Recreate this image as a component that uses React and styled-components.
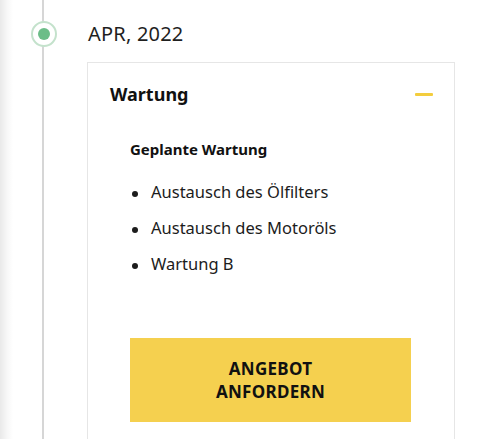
import React from 'react';
import styled, { createGlobalStyle } from 'styled-components';

const GlobalStyle = createGlobalStyle`
  html, body {
    margin: 0;
    padding: 0;
    background: #fff;
  }
  body {
    font-family: "Noto Sans", "Open Sans", Arial, sans-serif;
    color: #1a1a1a;
  }
`;

const Page = styled.div`
  height: 439px;
  overflow: hidden;
  background: linear-gradient(90deg, #e9e9e9 0px, #f7f7f7 7px, #fff 13px);
`;

const TimelineItem = styled.div`
  display: flex;
  height: 100%;
`;

const Rail = styled.div`
  width: 87px;
  flex-shrink: 0;
  display: flex;
  justify-content: center;
  background: linear-gradient(90deg, transparent 42px, #d6d6d6 42px, #d6d6d6 44px, transparent 44px);
`;

const Marker = styled.span`
  box-sizing: border-box;
  width: 26px;
  height: 26px;
  margin-top: 21px;
  border-radius: 50%;
  border: 2px solid #c4e2cc;
  background: #fff;
  display: flex;
  align-items: center;
  justify-content: center;

  &::after {
    content: '';
    width: 12px;
    height: 12px;
    border-radius: 50%;
    background: #6cbd88;
  }
`;

const Content = styled.div`
  flex: 1;
  display: flex;
  flex-direction: column;
`;

const DateLabel = styled.div`
  font-size: 20px;
  line-height: 28px;
  padding: 20px 0 14px 1px;
  color: #1f1f1f;
  letter-spacing: 0.2px;
`;

const Card = styled.section`
  width: 368px;
  box-sizing: border-box;
  border: 1px solid #e6e6e6;
  border-bottom: none;
  flex: 1;
  background: #fff;
`;

const CardHeader = styled.div`
  display: flex;
  align-items: center;
  justify-content: space-between;
  padding: 19px 21px 21px 22px;
`;

const CardTitle = styled.h2`
  margin: 0;
  font-size: 18px;
  line-height: 24px;
  font-weight: 700;
  color: #111;
`;

const Collapse = styled.span`
  width: 18px;
  height: 3px;
  border-radius: 1px;
  background: #f3cd3e;
`;

const CardBody = styled.div`
  padding: 12px 43px 0 42px;
`;

const SubTitle = styled.h3`
  margin: 0;
  font-size: 15px;
  line-height: 20px;
  font-weight: 700;
  color: #111;
`;

const List = styled.ul`
  list-style: none;
  margin: 15px 0 0;
  padding: 0;
`;

const Item = styled.li`
  position: relative;
  padding-left: 21px;
  font-size: 16.5px;
  line-height: 36px;
  color: #1c1c1c;

  &::before {
    content: '';
    position: absolute;
    left: 2px;
    top: 17px;
    width: 6px;
    height: 6px;
    border-radius: 50%;
    background: #1c1c1c;
  }
`;

const RequestButton = styled.button`
  display: block;
  width: 100%;
  height: 84px;
  margin-top: 56px;
  border: none;
  background: #f5d04f;
  font-family: inherit;
  font-size: 17px;
  line-height: 23px;
  font-weight: 700;
  letter-spacing: 0.3px;
  color: #111;
  text-transform: uppercase;
  cursor: pointer;
`;

const tasks = ['Austausch des Ölfilters', 'Austausch des Motoröls', 'Wartung B'];

export default function App() {
  return (
    <Page>
      <GlobalStyle />
      <TimelineItem>
        <Rail>
          <Marker />
        </Rail>
        <Content>
          <DateLabel>APR, 2022</DateLabel>
          <Card>
            <CardHeader>
              <CardTitle>Wartung</CardTitle>
              <Collapse />
            </CardHeader>
            <CardBody>
              <SubTitle>Geplante Wartung</SubTitle>
              <List>
                {tasks.map((task) => (
                  <Item key={task}>{task}</Item>
                ))}
              </List>
              <RequestButton>
                Angebot
                <br />
                anfordern
              </RequestButton>
            </CardBody>
          </Card>
        </Content>
      </TimelineItem>
    </Page>
  );
}
